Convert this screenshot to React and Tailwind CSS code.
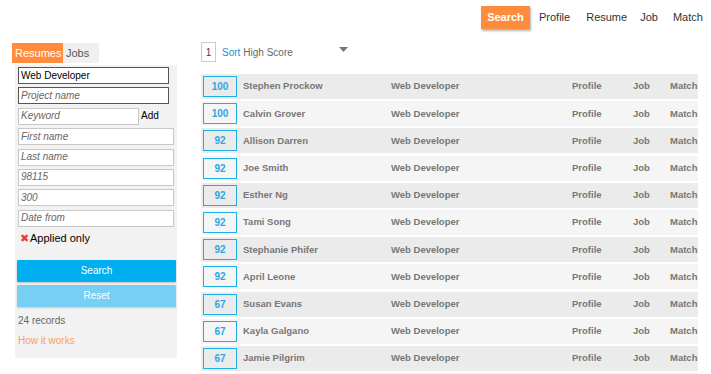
import React from "react";

const rows = [
  [100, "Stephen Prockow"],
  [100, "Calvin Grover"],
  [92, "Allison Darren"],
  [92, "Joe Smith"],
  [92, "Esther Ng"],
  [92, "Tami Song"],
  [92, "Stephanie Phifer"],
  [92, "April Leone"],
  [67, "Susan Evans"],
  [67, "Kayla Galgano"],
  [67, "Jamie Pilgrim"],
];

function Field({ value, placeholder, w, dark }) {
  return (
    <div
      className={`h-[17px] flex items-center pl-[2px] bg-white text-[10px] leading-none ${
        dark ? "border border-[#555]" : "border border-[#c8c8c8]"
      } ${w}`}
    >
      {value ? (
        <span className="text-black">{value}</span>
      ) : (
        <span className="italic text-[#666]">{placeholder}</span>
      )}
    </div>
  );
}

export default function App() {
  return (
    <div
      className="w-[711px] h-[374px] overflow-hidden bg-white text-[#333]"
      style={{ fontFamily: '"Liberation Sans", Arial, sans-serif' }}
    >
      {/* top nav */}
      <div className="flex items-center h-[34px] pt-[1px]">
        <div className="ml-[481px] w-[49px] h-[23px] bg-[#ff8c3d] text-white font-bold text-[11px] flex items-center justify-center shadow-[1px_2px_2px_rgba(0,0,0,0.3)]">
          Search
        </div>
        <span className="ml-[9px] text-[11px]">Profile</span>
        <span className="ml-[16px] text-[11px]">Resume</span>
        <span className="ml-[13px] text-[11px]">Job</span>
        <span className="ml-[15px] text-[11px]">Match</span>
      </div>

      <div className="flex mt-[9px]">
        {/* left column */}
        <div className="ml-[12px] w-[165px] flex flex-col">
          <div className="flex h-[20px]">
            <div className="w-[51px] bg-[#ff8c3d] text-white text-[11px] flex items-center pl-[3px]">
              Resumes
            </div>
            <div className="w-[36px] bg-[#f0f0f0] text-[#555] text-[11px] flex items-center pl-[3px]">
              Jobs
            </div>
          </div>
          <div className="mt-[2px] ml-[3px] w-[162px] h-[293px] bg-[#f2f2f2] pt-[2px] pl-[3px] flex flex-col">
            <div className="flex flex-col gap-[3.4px]">
              <Field value="Web Developer" w="w-[151px]" dark />
              <Field placeholder="Project name" w="w-[151px]" dark />
              <div className="flex items-center">
                <Field placeholder="Keyword" w="w-[121px]" />
                <span className="ml-[2px] text-[10px] text-black -mt-[2px]">Add</span>
              </div>
              <Field placeholder="First name" w="w-[156px]" />
              <Field placeholder="Last name" w="w-[156px]" />
              <Field placeholder="98115" w="w-[156px]" />
              <Field placeholder="300" w="w-[156px]" />
              <Field placeholder="Date from" w="w-[156px]" />
            </div>
            <div className="flex items-center mt-[5px] ml-[2px] h-[14px]">
              <span className="text-[#e8413f] text-[11px] leading-none">✖</span>
              <span className="text-[11px] text-black ml-[1px]">Applied only</span>
            </div>
            <div className="mt-[14px] -ml-[1px] w-[159px] h-[22px] bg-[#00aff0] text-white text-[10px] flex items-center justify-center rounded-[1px] shadow-[0_1px_2px_rgba(0,0,0,0.2)]">
              Search
            </div>
            <div className="mt-[3px] -ml-[1px] w-[159px] h-[22px] bg-[#77d0f3] text-white text-[10px] flex items-center justify-center rounded-[1px] shadow-[0_1px_2px_rgba(0,0,0,0.15)]">
              Reset
            </div>
            <div className="mt-[9px] text-[10px] text-[#666] leading-none h-[10px] flex items-center">
              24 records
            </div>
            <div className="mt-[10px] text-[10px] text-[#f7a06a] leading-none h-[10px] flex items-center">
              How it works
            </div>
          </div>
        </div>

        {/* right column */}
        <div className="ml-[24px] w-[497px] flex flex-col">
          <div className="flex items-center h-[20px] -mt-[1px]">
            <div className="w-[15px] h-[20px] border border-[#ccc] text-[10px] text-[#444] flex items-center justify-center">
              1
            </div>
            <span className="ml-[6px] text-[10px] text-[#1a8fd6]">Sort</span>
            <span className="ml-[3px] text-[10px] text-[#666]">High Score</span>
            <svg className="ml-[46px] -mt-[6px]" width="9" height="5" viewBox="0 0 9 5">
              <path d="M0 0 H9 L4.5 5 Z" fill="#777" />
            </svg>
          </div>
          <div className="mt-[12px] flex flex-col gap-[2.2px]">
            {rows.map(([score, name], i) => (
              <div
                key={i}
                className={`h-[25px] flex items-center shrink-0 text-[9.5px] font-bold text-[#777] ${
                  i % 2 === 0 ? "bg-[#ebebeb]" : "bg-[#f5f5f5]"
                }`}
              >
                <div className="ml-[2px] w-[34px] h-[21px] border-[1.5px] border-[#1ab0e6] text-[#2aa8e4] text-[10px] flex items-center justify-center">
                  {score}
                </div>
                <span className="ml-[6px] w-[148px]">{name}</span>
                <span className="w-[181px]">Web Developer</span>
                <span className="w-[61px]">Profile</span>
                <span className="w-[37px]">Job</span>
                <span>Match</span>
              </div>
            ))}
            <div className="h-[25px] shrink-0 bg-[#f5f5f5]" />
          </div>
        </div>
      </div>
    </div>
  );
}
